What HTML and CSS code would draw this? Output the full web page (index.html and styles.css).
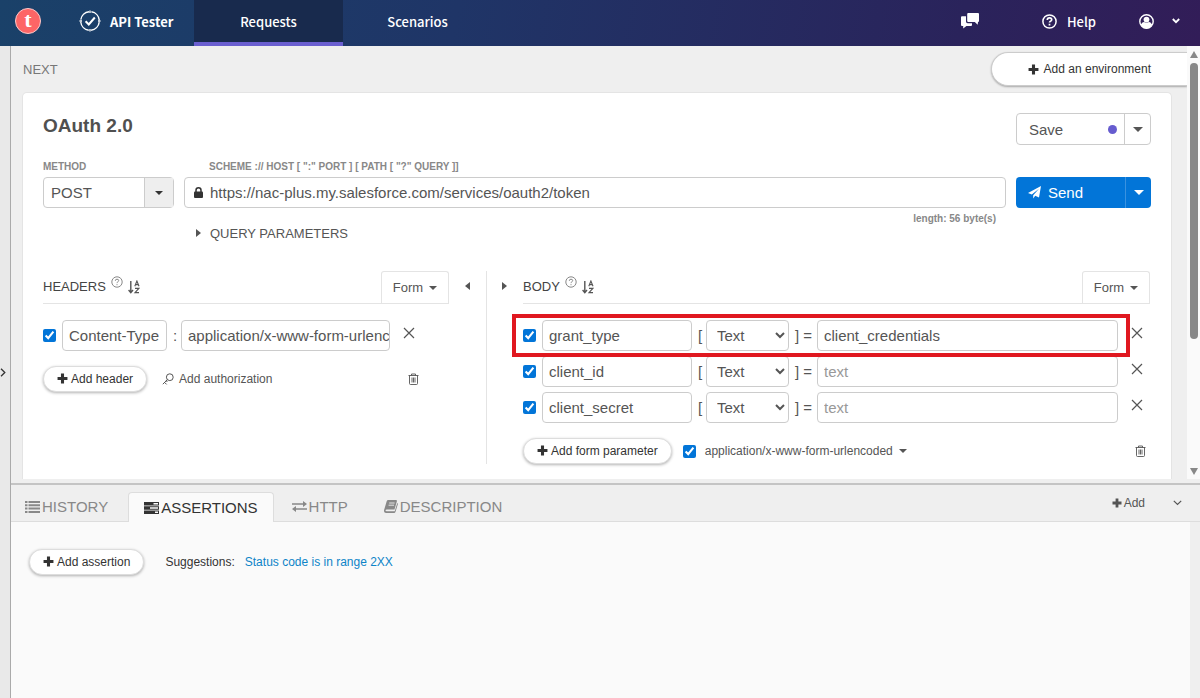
FILE: index.html
```html
<!DOCTYPE html>
<html lang="en">
<head>
    <meta charset="UTF-8">
    <meta name="viewport" content="width=device-width, initial-scale=1.0">
    <title>API Tester</title>
    <link rel="stylesheet" href="styles.css">
</head>
<body>
    <!-- shared icons -->
    <svg class="sprite" aria-hidden="true">
        <symbol id="i-plus" viewBox="0 0 10 10"><path d="M3.6 0.5h2.8v3.1h3.1v2.8H6.4v3.1H3.6V6.4H0.5V3.6h3.1z" fill="currentColor"/></symbol>
        <symbol id="i-close" viewBox="0 0 12 12"><path d="M1 1l10 10M11 1L1 11" fill="none" stroke="currentColor" stroke-width="1.2"/></symbol>
        <symbol id="i-trash" viewBox="0 0 11 12"><path d="M0.5 2.5h10M3.5 2.5V1h4v1.5M1.5 2.5v8q0 1 1 1h6q1 0 1-1v-8M4 4.5v5M5.5 4.5v5M7 4.5v5" fill="none" stroke="currentColor" stroke-width="0.9"/></symbol>
        <symbol id="i-help" viewBox="0 0 12 12"><circle cx="6" cy="6" r="5.2" fill="none" stroke="currentColor"/><path d="M4.3 4.8q0-1.6 1.7-1.6t1.7 1.4q0 .8-1 1.3-.7.4-.7 1.2M6 8.2v1" fill="none" stroke="currentColor"/></symbol>
        <symbol id="i-sort" viewBox="0 0 12 14"><path d="M2.8 1v11M0.6 10l2.2 2.6L5 10" fill="none" stroke="currentColor" stroke-width="1.4"/><path d="M6.8 6.2L8.9 1l2.1 5.2M7.5 4.6h2.8M7 8.4h3.8L7 12.6h4" fill="none" stroke="currentColor" stroke-width="1.1"/></symbol>
    </svg>

    <header class="topbar">
        <a class="logo" href="#" aria-label="Home"><span>t</span></a>
        <a class="brand" href="#">
            <svg width="22" height="22" viewBox="0 0 22 22" fill="none" stroke="currentColor">
                <circle cx="11" cy="11" r="9.3" stroke-width="1.4" stroke-dasharray="12.2 2.4" stroke-dashoffset="-1.2"/>
                <path d="M11 0.5v2.5M11 19v2.5M0.5 11H3M19 11h2.5" stroke-width="1.3"/>
                <path d="M6.6 11.2l3.2 3.3 6-7" stroke-width="2"/>
            </svg>
            API Tester
        </a>
        <nav class="topnav">
            <a class="active" href="#">Requests</a>
            <a href="#">Scenarios</a>
        </nav>
        <div class="topactions">
            <button class="chat" aria-label="Messages">
                <svg width="18" height="16" viewBox="0 0 18 16" fill="currentColor">
                    <path d="M7.2 0H17q1 0 1 1v7q0 1-1 1l-.3 2.8L13.8 9H7.2q-1 0-1-1V1q0-1 1-1z"/>
                    <path d="M1 3.2h4V8.6q0 1.5 1.6 1.6H11V12q0 1-1 1H5.4L2.2 15.6V13H1q-1 0-1-1V4.2q0-1 1-1z"/>
                </svg>
            </button>
            <button class="help">
                <svg width="15" height="15" viewBox="0 0 15 15" fill="none" stroke="currentColor">
                    <circle cx="7.5" cy="7.5" r="6.6" stroke-width="1.5"/>
                    <path d="M5.3 6q0-2.200 2.200-2.200T9.700 5.700q0 1-1.200 1.500-1 .5-1 1.400M7.500 9.800v1.600" stroke-width="1.700"/>
                </svg>
                Help
            </button>
            <button class="user" aria-label="Account">
                <svg width="15" height="15" viewBox="0 0 15 15">
                    <circle cx="7.5" cy="7.5" r="6.7" fill="none" stroke="currentColor" stroke-width="1.4"/>
                    <circle cx="7.5" cy="5.6" r="2.9" fill="currentColor"/>
                    <path d="M1.800 10.400Q3.600 8 5 8q2.500 1.600 5 0 1.400 0 3.200 2.400-1.900 4-5.700 4t-5.700-4z" fill="currentColor"/>
                </svg>
                <svg width="8" height="6" viewBox="0 0 8 6"><path d="M0.8 1l3.2 3.2L7.2 1" fill="none" stroke="currentColor" stroke-width="1.8"/></svg>
            </button>
        </div>
    </header>

    <div class="workspace">
        <aside class="rail">
            <button aria-label="Open drawer">
                <svg width="6" height="9" viewBox="0 0 6 9"><path d="M1 0.800l3.800 3.700L1 8.200" fill="none" stroke="currentColor" stroke-width="1.300"/></svg>
            </button>
        </aside>

        <main class="main">
            <div class="request-pane">
                <div class="request-scroll">
                    <div class="crumbs">
                        <span>NEXT</span>
                        <button class="environment"><svg width="11" height="11"><use href="#i-plus"/></svg>Add an environment</button>
                    </div>

                    <section class="card">
                        <div class="title-row">
                            <h1>OAuth 2.0</h1>
                            <div class="split save">
                                <button class="split-main">Save <i class="dot"></i></button>
                                <button class="split-caret" aria-label="Save options"><i class="caret"></i></button>
                            </div>
                        </div>

                        <div class="url-grid">
                            <label class="field-label" for="method">METHOD</label>
                            <label class="field-label scheme" for="url">SCHEME :// HOST [ ":" PORT ] [ PATH [ "?" QUERY ]]</label>
                            <div class="method">
                                <select id="method">
                                    <option>POST</option>
                                    <option>GET</option>
                                </select>
                                <span class="method-caret"><i class="caret"></i></span>
                            </div>
                            <div class="url">
                                <svg width="9" height="11" viewBox="0 0 9 11"><path d="M2 5V3.200q0-2.400 2.500-2.400T7 3.200V5" fill="none" stroke="currentColor" stroke-width="1.500"/><rect y="4.600" width="9" height="6.400" rx="1" fill="currentColor"/></svg>
                                <input id="url" type="text" value="https://nac-plus.my.salesforce.com/services/oauth2/token">
                            </div>
                            <div class="split send">
                                <button class="split-main">
                                    <svg width="13" height="13" viewBox="0 0 13 13" fill="currentColor"><path d="M13 0L11 11.400 7.200 9.800 5.200 12.600V9.300L11 2.800 3.800 8.600 0 7z"/></svg>
                                    Send
                                </button>
                                <button class="split-caret" aria-label="Send options"><i class="caret"></i></button>
                            </div>
                            <div class="url-length">length: 56 byte(s)</div>
                        </div>
                        <button class="query"><i class="tri-right"></i>QUERY PARAMETERS</button>

                        <div class="columns">
                            <section class="headers">
                                <div class="section-head">
                                    <h2>HEADERS</h2>
                                    <svg class="sup" width="12" height="12"><use href="#i-help"/></svg>
                                    <svg width="12" height="14"><use href="#i-sort"/></svg>
                                    <button class="form-tab">Form <i class="caret"></i></button>
                                </div>
                                <div class="row">
                                    <input type="checkbox" aria-label="Use header" checked>
                                    <input class="text header-name" type="text" aria-label="Header name" value="Content-Type">
                                    <span class="colon">:</span>
                                    <input class="text value" type="text" aria-label="Header value" value="application/x-www-form-urlencoded">
                                    <button class="icon remove-header" aria-label="Remove header"><svg width="12" height="12"><use href="#i-close"/></svg></button>
                                </div>
                                <div class="row-actions">
                                    <button class="pill"><svg width="11" height="11"><use href="#i-plus"/></svg>Add header</button>
                                    <button class="plain">
                                        <svg width="12" height="13" viewBox="0 0 12 13" fill="none" stroke="currentColor"><circle cx="7.800" cy="4.200" r="3.400"/><path d="M5.400 6.600L0.800 11.200M2.600 9.400l2 2M4.200 7.800l1.200 1.200"/></svg>
                                        Add authorization
                                    </button>
                                    <button class="icon trash" aria-label="Delete all headers"><svg width="11" height="12"><use href="#i-trash"/></svg></button>
                                </div>
                            </section>

                            <div class="divider">
                                <button aria-label="Collapse headers"><i class="tri-left"></i></button>
                                <button aria-label="Collapse body"><i class="tri-right"></i></button>
                            </div>

                            <section class="body">
                                <div class="section-head">
                                    <h2>BODY</h2>
                                    <svg class="sup" width="12" height="12"><use href="#i-help"/></svg>
                                    <svg width="12" height="14"><use href="#i-sort"/></svg>
                                    <button class="form-tab">Form <i class="caret"></i></button>
                                </div>
                                <div class="row marked">
                                    <input type="checkbox" aria-label="Use grant_type" checked>
                                    <input class="text param-name" type="text" aria-label="Parameter name" value="grant_type">
                                    <span class="bracket">[</span>
                                    <select class="text" aria-label="Parameter type"><option>Text</option><option>File</option></select>
                                    <span class="equals">] =</span>
                                    <input class="text value" type="text" aria-label="Parameter value" placeholder="text" value="client_credentials">
                                    <button class="icon" aria-label="Remove grant_type"><svg width="12" height="12"><use href="#i-close"/></svg></button>
                                </div>
                                <div class="row">
                                    <input type="checkbox" aria-label="Use client_id" checked>
                                    <input class="text param-name" type="text" aria-label="Parameter name" value="client_id">
                                    <span class="bracket">[</span>
                                    <select class="text" aria-label="Parameter type"><option>Text</option><option>File</option></select>
                                    <span class="equals">] =</span>
                                    <input class="text value" type="text" aria-label="Parameter value" placeholder="text">
                                    <button class="icon" aria-label="Remove client_id"><svg width="12" height="12"><use href="#i-close"/></svg></button>
                                </div>
                                <div class="row">
                                    <input type="checkbox" aria-label="Use client_secret" checked>
                                    <input class="text param-name" type="text" aria-label="Parameter name" value="client_secret">
                                    <span class="bracket">[</span>
                                    <select class="text" aria-label="Parameter type"><option>Text</option><option>File</option></select>
                                    <span class="equals">] =</span>
                                    <input class="text value" type="text" aria-label="Parameter value" placeholder="text">
                                    <button class="icon" aria-label="Remove client_secret"><svg width="12" height="12"><use href="#i-close"/></svg></button>
                                </div>
                                <div class="row-actions">
                                    <button class="pill"><svg width="11" height="11"><use href="#i-plus"/></svg>Add form parameter</button>
                                    <input id="encoding" type="checkbox" checked>
                                    <label class="encoding" for="encoding">application/x-www-form-urlencoded <i class="caret"></i></label>
                                    <button class="icon trash" aria-label="Delete all parameters"><svg width="11" height="12"><use href="#i-trash"/></svg></button>
                                </div>
                            </section>
                        </div>
                    </section>
                </div>
                <div class="scrollbar"><i class="arrow-up"></i><i class="thumb"></i><i class="arrow-down"></i></div>
            </div>

            <div class="dock">
                <nav class="tabs">
                    <a class="tab-history" href="#">
                        <svg width="15" height="12" viewBox="0 0 15 12" fill="currentColor"><path d="M0 0h2.500v2H0zM0 3.300h2.500v2H0zM0 6.600h2.500v2H0zM0 9.900h2.500v2H0zM3.500 0H15v2H3.500zM3.500 3.300H15v2H3.500zM3.500 6.600H15v2H3.500zM3.500 9.900H15v2H3.500z"/></svg>
                        HISTORY
                    </a>
                    <a class="active" href="#">
                        <svg width="15" height="12" viewBox="0 0 15 12" fill="currentColor"><path fill-rule="evenodd" d="M0 0h15v3.400H0zM9.500 1v1.400H14V1zM0 4.300h15v3.400H0zM6 5.300v1.400h8V5.300zM0 8.600h15V12H0zM11 9.600V11h3V9.600z"/></svg>
                        ASSERTIONS
                    </a>
                    <a href="#">
                        <svg width="15" height="11" viewBox="0 0 15 11"><path d="M0 3h12M3 8h12" stroke="currentColor" stroke-width="1.600"/><path d="M11 0l4 3-4 3zM4 5L0 8l4 3z" fill="currentColor"/></svg>
                        HTTP
                    </a>
                    <a href="#">
                        <svg width="14" height="13" viewBox="0 0 14 13"><path d="M4.300 0H12q1.200 0 .9 1.200L10.500 9.500H3q-1.700 0-1.500 1.100.1.700 1.200.7h8L13.300 3l.7.800-2.500 8q-.3 1.200-1.500 1.200H2Q-.5 12.700.1 10L2.700 1.300Q3 0 4.300 0z" fill="currentColor"/><path d="M5.200 3h5.400M4.600 5.200H10" stroke="#eee" stroke-width="0.900"/></svg>
                        DESCRIPTION
                    </a>
                    <div class="tab-tools">
                        <button><svg width="10" height="10"><use href="#i-plus"/></svg>Add</button>
                        <button aria-label="Collapse panel"><svg width="9" height="6" viewBox="0 0 9 6"><path d="M0.800 0.800l3.700 3.700L8.200 0.800" fill="none" stroke="currentColor" stroke-width="1.200"/></svg></button>
                    </div>
                </nav>
                <div class="panel">
                    <button class="pill"><svg width="11" height="11"><use href="#i-plus"/></svg>Add assertion</button>
                    <span>Suggestions:</span>
                    <a href="#">Status code is in range 2XX</a>
                </div>
            </div>
        </main>
    </div>
</body>
</html>
```
FILE: styles.css
```css
* {
    box-sizing: border-box;
}

body {
    margin: 0;
    min-height: 100vh;
    display: flex;
    flex-direction: column;
    font-family: "Liberation Sans", Arial, sans-serif;
    font-size: 13px;
    color: #555;
    background-color: #efefef;
}

button, input, select {
    font: inherit;
    color: inherit;
    margin: 0;
}

button {
    padding: 0;
    border: none;
    background: none;
    display: flex;
    align-items: center;
    white-space: nowrap;
    cursor: pointer;
}

a {
    color: inherit;
    text-decoration: none;
}

svg {
    flex: none;
}

.sprite {
    position: absolute;
    width: 0;
    height: 0;
}

input[type="checkbox"] {
    flex: none;
    width: 13px;
    height: 13px;
    accent-color: #0275d8;
}

/* arrows */
.caret {
    border: 4px solid transparent;
    border-top-color: currentColor;
    border-bottom: none;
}

.tri-right {
    border: 4px solid transparent;
    border-left: 5px solid currentColor;
    border-right: none;
}

.tri-left {
    border: 4px solid transparent;
    border-right: 5px solid currentColor;
    border-left: none;
}

/* top bar */
.topbar {
    display: flex;
    align-items: stretch;
    height: 46px;
    color: #fff;
    background: linear-gradient(100deg, #1a4169 0%, #1f3567 38%, #2a235b 80%, #321d58 100%);
    font-family: "Noto Sans CJK SC", "Noto Sans", sans-serif;
    font-size: 13px;
    font-weight: 500;
}

.logo {
    display: flex;
    align-items: center;
    padding: 0 38px 4px 15px;
}

.logo span {
    width: 26px;
    height: 26px;
    border: 1px solid #ffc9c9;
    border-radius: 50%;
    background-color: #fd6566;
    font: bold 22px/21px "Liberation Serif", serif;
    text-align: center;
}

.brand {
    display: flex;
    align-items: center;
    gap: 9px;
    width: 115px;
    padding-bottom: 4px;
    font-weight: 700;
    white-space: nowrap;
}

.topnav {
    display: flex;
}

.topnav a {
    display: flex;
    align-items: center;
    justify-content: center;
    width: 149px;
    border-bottom: 4px solid transparent;
}

.topnav .active {
    background-color: #182a4d;
    border-bottom-color: #6a5fd0;
}

.topactions {
    display: flex;
    align-items: center;
    margin-left: auto;
    padding: 0 20px 4px 0;
}

.chat {
    margin-right: 63px;
}

.help {
    gap: 10px;
    margin-right: 43px;
}

.user {
    gap: 18px;
}

/* workspace */
.workspace {
    flex: 1;
    display: flex;
}

.rail {
    display: flex;
    align-items: center;
    width: 11px;
    border-right: 1px solid #aaa;
    background-color: #e9e9e9;
    color: #333;
}

.main {
    flex: 1;
    min-width: 0;
    display: flex;
    flex-direction: column;
}

.request-pane {
    display: flex;
}

.request-scroll {
    flex: 1;
    min-width: 0;
}

.scrollbar {
    width: 13px;
    display: flex;
    flex-direction: column;
    align-items: center;
    padding: 5px 0 4px;
    background-color: #fafafa;
}

.arrow-up, .arrow-down {
    border: 4px solid transparent;
}

.arrow-up {
    border-bottom: 7px solid #888;
    border-top: none;
}

.arrow-down {
    border-top: 7px solid #888;
    border-bottom: none;
    margin-top: auto;
}

.thumb {
    width: 8px;
    height: 65%;
    margin-top: 5px;
    border-radius: 4px;
    background-color: #888;
}

.crumbs {
    display: flex;
    align-items: center;
    justify-content: space-between;
    height: 46px;
    padding-left: 12px;
    color: #777;
}

.environment {
    gap: 5px;
    height: 34px;
    padding: 0 36px;
    border: 1px solid #ccc;
    border-right: none;
    border-radius: 17px 0 0 17px;
    background-color: #fff;
    box-shadow: 0 1px 2px rgba(0, 0, 0, 0.3);
    font-size: 12px;
    color: #333;
}

.card {
    margin: 0 15px 0 11px;
    padding: 20px 20px 15px;
    border: 1px solid #e4e4e4;
    border-bottom: none;
    border-radius: 5px 5px 0 0;
    background-color: #fff;
}

.title-row {
    display: flex;
    justify-content: space-between;
    align-items: flex-start;
}

h1 {
    margin: 2px 0 0;
    font-size: 19px;
    line-height: 22px;
    color: #505050;
}

.split {
    display: flex;
    width: 135px;
    border-radius: 4px;
    font-size: 15px;
}

.split .caret {
    border-width: 5px;
    border-bottom: none;
}

.split-main {
    flex: 1;
    padding: 0 12px;
}

.split-caret {
    width: 26px;
    justify-content: center;
    border-left: 1px solid #ccc;
}

.save {
    height: 32px;
    border: 1px solid #ccc;
}

.save .split-main {
    justify-content: space-between;
    padding-right: 7px;
}

.dot {
    width: 9px;
    height: 9px;
    border-radius: 50%;
    background-color: #665ccf;
}

.send {
    background-color: #0275d8;
    color: #fff;
}

.send .split-main {
    gap: 7px;
}

.send .split-caret {
    border-color: #3a92e0;
}

/* method and url */
.url-grid {
    display: grid;
    grid-template-columns: 131px 1fr 135px;
    column-gap: 10px;
    margin-top: 15px;
}

.field-label, .url-length {
    font-size: 10px;
    font-weight: bold;
    line-height: 13px;
    color: #888;
    margin-bottom: 4px;
}

.scheme {
    grid-column: 2 / 4;
    padding-left: 25px;
}

.method, .url {
    display: flex;
    height: 31px;
    border: 1px solid #ccc;
    border-radius: 4px;
    font-size: 15px;
}

.method select {
    flex: 1;
    appearance: none;
    padding: 0 7px;
    border: none;
    background: none;
}

.method-caret {
    display: flex;
    align-items: center;
    justify-content: center;
    width: 29px;
    border-left: 1px solid #ccc;
    background-color: #eee;
    color: #333;
}

.url {
    align-items: center;
    gap: 7px;
    padding: 0 9px;
}

.url svg {
    color: #333;
}

.url input {
    flex: 1;
    min-width: 0;
    padding: 0;
    border: none;
    background: none;
}

.url-length {
    grid-column: 2;
    margin: 4px 10px 0 0;
    text-align: right;
}

.query {
    gap: 9px;
    height: 16px;
    margin-left: 153px;
    font-size: 13px;
}

/* headers and body */
.columns {
    display: grid;
    grid-template-columns: 406px 74px minmax(0, 1fr);
    margin-top: 30px;
    padding-right: 1px;
}

.section-head {
    display: flex;
    align-items: center;
    gap: 5px;
    height: 33px;
    border-bottom: 1px solid #e4e4e4;
}

h2 {
    margin: 0;
    font-size: 13px;
    font-weight: normal;
    line-height: 32px;
    color: #444;
}

.sup {
    align-self: flex-start;
    margin-top: 5px;
    color: #888;
}

.form-tab {
    gap: 6px;
    justify-content: center;
    align-self: stretch;
    width: 68px;
    margin-left: auto;
    border: 1px solid #e4e4e4;
    border-bottom: none;
    border-radius: 3px 3px 0 0;
}

.row {
    display: flex;
    align-items: center;
    gap: 6px;
    height: 31px;
    margin-bottom: 5px;
    font-size: 15px;
}

.section-head + .row {
    margin-top: 16px;
}

.text {
    height: 31px;
    padding: 0 6px;
    border: 1px solid #ccc;
    border-radius: 4px;
    background-color: #fff;
}

.text::placeholder {
    color: #999;
}

select.text {
    width: 83px;
}

.value {
    flex: 1;
    min-width: 0;
    padding-right: 0;
}

.header-name {
    width: 105px;
}

.colon {
    width: 2px;
}

.param-name {
    width: 150px;
}

.bracket {
    width: 2px;
}

.equals {
    width: 16px;
    white-space: nowrap;
}

.icon {
    justify-content: center;
    width: 26px;
}

.row .icon {
    height: 25px;
    align-self: flex-start;
}

.remove-header {
    margin-right: 27px;
}

/* highlight drawn over the first parameter */
.marked {
    position: relative;
}

.marked::after {
    content: "";
    position: absolute;
    top: -6px;
    bottom: -6px;
    left: -11px;
    right: 20px;
    border: 4px solid #e01820;
    pointer-events: none;
}

.row-actions {
    display: flex;
    align-items: center;
    height: 26px;
    margin-top: 15px;
    font-size: 12px;
}

.pill {
    gap: 3px;
    height: 26px;
    padding: 0 13px 1px;
    border: 1px solid #ddd;
    border-radius: 13px;
    background-color: #fff;
    box-shadow: 0 1px 3px rgba(0, 0, 0, 0.3);
    font-size: 12px;
    color: #333;
}

.plain {
    gap: 5px;
    margin-left: 15px;
}

.row-actions input {
    margin: 0 9px 0 11px;
}

.encoding {
    display: flex;
    align-items: center;
    gap: 6px;
}

.trash {
    width: 20px;
    margin-left: auto;
}

.headers .trash {
    margin-right: 26px;
}

.divider {
    display: grid;
    grid-template-columns: 1fr 1fr;
    align-items: start;
    background: linear-gradient(#e4e4e4, #e4e4e4) center / 1px 100% no-repeat;
}

.divider button {
    justify-content: center;
    height: 30px;
}

/* bottom dock */
.dock {
    flex: 1;
    display: flex;
    flex-direction: column;
    margin-top: 4px;
    border-top: 2px solid #c4c4c4;
}

.tabs {
    display: flex;
    padding-top: 7px;
    font-size: 15px;
    color: #888;
}

.tabs a {
    display: flex;
    align-items: center;
    gap: 2px;
    height: 30px;
    padding: 0 18px;
    border-bottom: 1px solid #ddd;
}

.tabs .active {
    padding: 0 15px;
    border: 1px solid #ddd;
    border-bottom: none;
    border-radius: 4px 4px 0 0;
    background-color: #fafafa;
    color: #333;
}

.tabs .tab-history {
    padding: 0 20px 0 14px;
}

.tab-tools {
    flex: 1;
    display: flex;
    align-items: center;
    justify-content: flex-end;
    gap: 28px;
    padding: 0 18px 8px 0;
    border-bottom: 1px solid #ddd;
    font-size: 12px;
    color: #555;
}

.tab-tools button {
    gap: 2px;
}

.panel {
    flex: 1;
    display: flex;
    align-items: flex-start;
    margin-right: 10px;
    padding: 27px 18px;
    font-size: 12px;
    line-height: 26px;
    color: #333;
    background-color: #fafafa;
}

.panel span {
    margin: 0 10px 0 21px;
}

.panel a {
    color: #0d84c8;
}
```
